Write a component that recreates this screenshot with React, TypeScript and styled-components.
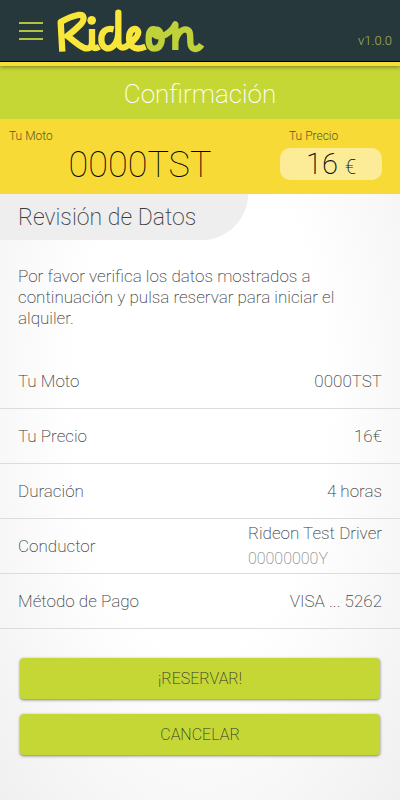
import React from "react";
import styled, { createGlobalStyle } from "styled-components";

const GlobalStyle = createGlobalStyle`
  *, *::before, *::after { box-sizing: border-box; }
  body {
    margin: 0;
    font-family: Roboto, "Liberation Sans", sans-serif;
    font-weight: 200;
    color: #3c3c3c;
  }
`;

const Page = styled.div`
  min-height: 100vh;
  background: radial-gradient(ellipse at center, #fff 45%, #f0f0f0 100%);
`;

const Header = styled.header`
  display: flex;
  align-items: center;
  height: 66px;
  padding: 0 8px 0 19px;
  background: #27383d;
  border-bottom: 4px solid #f8dc38;
  box-shadow: inset 0 -1px #000, 0 1px 4px rgba(0, 0, 0, 0.4);
  position: relative;
`;

const MenuButton = styled.button`
  display: flex;
  padding: 0;
  margin-right: 12px;
  border: 0;
  background: none;
  color: #afc43c;
  cursor: pointer;
`;

const Version = styled.span`
  margin: 19px 0 0 auto;
  font-size: 13px;
  line-height: 16px;
  font-weight: 300;
  color: #a2b64a;
`;

const PageTitle = styled.h1`
  margin: 0;
  padding-top: 4px;
  font-size: 26px;
  line-height: 49px;
  font-weight: 200;
  text-align: center;
  color: #fff;
  background: #c5d734;
`;

const Summary = styled.section`
  display: grid;
  grid-template-columns: 1fr 120px;
  height: 75px;
  padding: 9px 0 0 9px;
  background: #f8da36;
`;

const SummaryItem = styled.div`
  display: flex;
  flex-direction: column;
`;

const SummaryLabel = styled.span<{ $inset?: boolean }>`
  padding-left: ${(p) => (p.$inset ? 9 : 0)}px;
  font-size: 12px;
  line-height: 16px;
  font-weight: 300;
  color: #5e5428;
`;

const Plate = styled.strong`
  padding-right: 9px;
  font-size: 36px;
  line-height: 42px;
  font-weight: 100;
  text-align: center;
  color: #000;
`;

const PriceTag = styled.strong`
  width: 102px;
  height: 32px;
  margin-top: 4px;
  border-radius: 10px;
  background: #fcec98;
  font-size: 29px;
  line-height: 32px;
  font-weight: 200;
  text-align: center;
  color: #111;
`;

const Currency = styled.span`
  font-size: 20px;
`;

const SectionTitle = styled.h2`
  width: 62%;
  margin: 0;
  padding: 2px 0 0 18px;
  border-radius: 0 0 46px 0;
  background: #eee;
  font-size: 23px;
  line-height: 44px;
  font-weight: 200;
`;

const Intro = styled.p`
  margin: 0;
  padding: 26px 54px 25px 18px;
  font-size: 17px;
  line-height: 21px;
`;

const Details = styled.dl`
  margin: 0;
`;

const DetailRow = styled.div`
  display: flex;
  align-items: center;
  justify-content: space-between;
  height: 55px;
  padding: 0 18px;
  border-bottom: 1px solid #dcdcdc;
  font-size: 17px;
  line-height: 25px;
`;

const Term = styled.dt`
  flex: none;
`;

const Value = styled.dd`
  margin: 0;
`;

const Secondary = styled.div`
  font-size: 16px;
  color: #888;
`;

const Actions = styled.div`
  display: grid;
  gap: 15px;
  padding: 29px 20px 44px;
`;

const ActionButton = styled.button`
  height: 41px;
  padding: 0;
  border: 0;
  border-radius: 4px;
  background: #c5d734;
  box-shadow: 0 1px 3px rgba(0, 0, 0, 0.5);
  font-family: inherit;
  font-size: 16px;
  font-weight: 200;
  color: #333;
  cursor: pointer;
`;

const details = [
  { label: "Tu Moto", value: "0000TST" },
  { label: "Tu Precio", value: "16€" },
  { label: "Duración", value: "4 horas" },
  { label: "Conductor", value: "Rideon Test Driver", secondary: "00000000Y" },
  { label: "Método de Pago", value: "VISA ... 5262" },
];

function MenuIcon() {
  return (
    <svg width="24" height="20" viewBox="0 0 24 20" fill="none" stroke="currentColor" strokeWidth="2" aria-hidden="true">
      <path d="M0 2H24M0 10H24M0 18H24" />
    </svg>
  );
}

function Logo() {
  return (
    <svg width="150" height="46" viewBox="165 25 450 138" fill="none" strokeWidth="19" strokeLinejoin="round" role="img" aria-label="Rideon">
      <g stroke="#f8e63a">
        <path d="M187 156L182 67C200 57 218 49 234 46C254 43 256 60 240 76C228 88 215 99 202 109C219 121 235 137 251 144C267 150 276 142 276 129L276 88" />
        <path d="M276 131C276 146 285 149 298 141" />
        <path d="M341 89C317 83 304 98 304 119C304 146 326 154 342 137C352 127 355 114 355 94L355 39L355 126C356 145 369 149 384 137C400 124 416 109 415 98C413 82 391 85 388 107C383 137 401 156 437 141" />
        <circle cx="275" cy="62" r="13" fill="#f8e63a" stroke="none" />
      </g>
      <g stroke="#bfd23a">
        <path d="M468 90C446 84 446 106 446 121C446 141 455 150 468 146C485 142 490 116 481 99C476 88 466 87 462 95C456 110 481 116 498 104C511 96 519 88 526 74L526 151M526 125C529 105 543 89 557 89C574 90 570 111 571 128C572 152 592 154 605 135" />
      </g>
    </svg>
  );
}

export default function App() {
  return (
    <Page>
      <GlobalStyle />
      <Header>
        <MenuButton type="button" aria-label="Menú">
          <MenuIcon />
        </MenuButton>
        <Logo />
        <Version>v1.0.0</Version>
      </Header>
      <main>
        <PageTitle>Confirmación</PageTitle>
        <Summary>
          <SummaryItem>
            <SummaryLabel>Tu Moto</SummaryLabel>
            <Plate>0000TST</Plate>
          </SummaryItem>
          <SummaryItem>
            <SummaryLabel $inset>Tu Precio</SummaryLabel>
            <PriceTag>
              16 <Currency>€</Currency>
            </PriceTag>
          </SummaryItem>
        </Summary>
        <SectionTitle>Revisión de Datos</SectionTitle>
        <Intro>Por favor verifica los datos mostrados a continuación y pulsa reservar para iniciar el alquiler.</Intro>
        <Details>
          {details.map((d) => (
            <DetailRow key={d.label}>
              <Term>{d.label}</Term>
              <Value>
                {d.value}
                {d.secondary && <Secondary>{d.secondary}</Secondary>}
              </Value>
            </DetailRow>
          ))}
        </Details>
        <Actions>
          <ActionButton type="button">¡RESERVAR!</ActionButton>
          <ActionButton type="button">CANCELAR</ActionButton>
        </Actions>
      </main>
    </Page>
  );
}
